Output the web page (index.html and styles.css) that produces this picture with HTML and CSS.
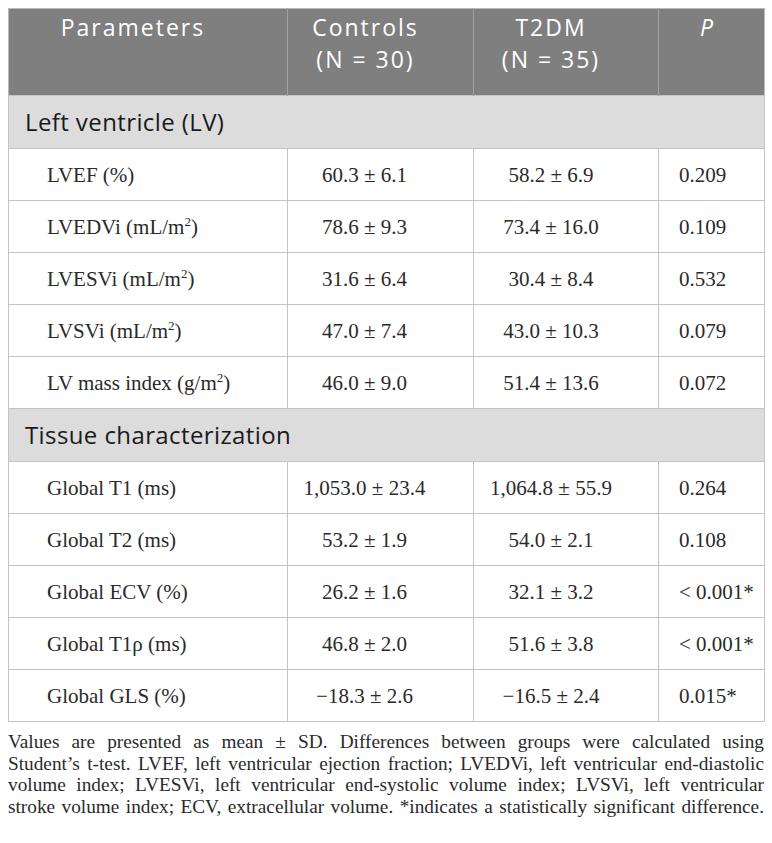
FILE: index.html
```html
<!DOCTYPE html>
<html>

<head>
    <title>Table</title>
    <link rel="stylesheet" href="styles.css">
</head>

<body>
    <table class="data">
        <colgroup>
            <col class="c1">
            <col class="c2">
            <col class="c3">
            <col class="c4">
        </colgroup>
        <thead>
            <tr>
                <th>Parameters</th>
                <th>Controls<br>(N = 30)</th>
                <th>T2DM<br>(N = 35)</th>
                <th class="p"><i>P</i></th>
            </tr>
        </thead>
        <tbody>
            <tr class="section">
                <td colspan="4">Left ventricle (LV)</td>
            </tr>
            <tr>
                <td class="name">LVEF (%)</td>
                <td class="ctl">60.3 ± 6.1</td>
                <td class="dm">58.2 ± 6.9</td>
                <td class="p">0.209</td>
            </tr>
            <tr>
                <td class="name">LVEDVi (mL/m<sup>2</sup>)</td>
                <td class="ctl">78.6 ± 9.3</td>
                <td class="dm">73.4 ± 16.0</td>
                <td class="p">0.109</td>
            </tr>
            <tr>
                <td class="name">LVESVi (mL/m<sup>2</sup>)</td>
                <td class="ctl">31.6 ± 6.4</td>
                <td class="dm">30.4 ± 8.4</td>
                <td class="p">0.532</td>
            </tr>
            <tr>
                <td class="name">LVSVi (mL/m<sup>2</sup>)</td>
                <td class="ctl">47.0 ± 7.4</td>
                <td class="dm">43.0 ± 10.3</td>
                <td class="p">0.079</td>
            </tr>
            <tr>
                <td class="name">LV mass index (g/m<sup>2</sup>)</td>
                <td class="ctl">46.0 ± 9.0</td>
                <td class="dm">51.4 ± 13.6</td>
                <td class="p">0.072</td>
            </tr>
            <tr class="section">
                <td colspan="4">Tissue characterization</td>
            </tr>
            <tr>
                <td class="name">Global T1 (ms)</td>
                <td class="ctl">1,053.0 ± 23.4</td>
                <td class="dm">1,064.8 ± 55.9</td>
                <td class="p">0.264</td>
            </tr>
            <tr>
                <td class="name">Global T2 (ms)</td>
                <td class="ctl">53.2 ± 1.9</td>
                <td class="dm">54.0 ± 2.1</td>
                <td class="p">0.108</td>
            </tr>
            <tr>
                <td class="name">Global ECV (%)</td>
                <td class="ctl">26.2 ± 1.6</td>
                <td class="dm">32.1 ± 3.2</td>
                <td class="p">&lt; 0.001*</td>
            </tr>
            <tr>
                <td class="name">Global T1ρ (ms)</td>
                <td class="ctl">46.8 ± 2.0</td>
                <td class="dm">51.6 ± 3.8</td>
                <td class="p">&lt; 0.001*</td>
            </tr>
            <tr>
                <td class="name">Global GLS (%)</td>
                <td class="ctl">−18.3 ± 2.6</td>
                <td class="dm">−16.5 ± 2.4</td>
                <td class="p">0.015*</td>
            </tr>
        </tbody>
    </table>

    <p class="note">Values are presented as mean ± SD. Differences between groups were calculated using<br>
        Student’s t&#8209;test. LVEF, left ventricular ejection fraction; LVEDVi, left ventricular end&#8209;diastolic<br>
        volume index; LVESVi, left ventricular end&#8209;systolic volume index; LVSVi, left ventricular<br>
        stroke volume index; ECV, extracellular volume. *indicates a statistically significant difference.</p>
</body>

</html>
```

FILE: styles.css
```css
html,
body {
    margin: 0;
    padding: 0;
    background: #fff;
}

body {
    padding: 8px;
}

.data {
    width: 756px;
    table-layout: fixed;
    border-collapse: collapse;
    border: 1px solid #b9b9b9;
    font-family: "Liberation Serif", serif;
    font-size: 21px;
    color: #2a2a2a;
}

.c1 { width: 279px; }
.c2 { width: 186px; }
.c3 { width: 185px; }
.c4 { width: 106px; }

th {
    background: #7f7f7f;
    color: #fff;
    font-family: "Open Sans", sans-serif;
    font-weight: normal;
    font-size: 23px;
    letter-spacing: 2px;
    line-height: 31.5px;
    vertical-align: top;
    height: 83px;
    padding: 3px 30px 0 0;
    border-left: 1px solid #a2a2a2;
    text-align: center;
}

th:first-child {
    border-left: none;
}

th.p {
    padding-right: 8px;
}

td {
    border: 1px solid #c4c4c4;
    text-align: center;
    height: 49px;
    padding: 2px 0 0;
}

td.name {
    text-align: left;
    padding-left: 38px;
}

td.ctl {
    padding-right: 32px;
}

td.dm {
    padding-right: 30px;
}

td.p {
    text-align: left;
    padding-left: 20px;
}

sup {
    font-size: 13px;
    line-height: 0;
    vertical-align: 8px;
}

.section td {
    background: #dcdcdc;
    font-family: "Open Sans", sans-serif;
    font-size: 24px;
    letter-spacing: 0.4px;
    color: #1a1a1a;
    text-align: left;
    padding: 0 0 1px 16px;
    height: 51px;
}

.note {
    width: 756px;
    margin: 9px 0 0;
    font-family: "Liberation Serif", serif;
    font-size: 19.3px;
    line-height: 21.6px;
    text-align: justify;
    text-align-last: justify;
    color: #2a2a2a;
}
```
